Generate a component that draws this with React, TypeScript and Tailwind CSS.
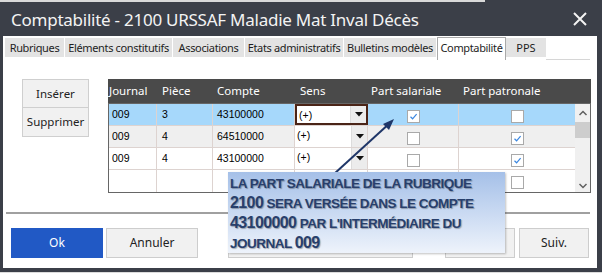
import React from "react";

const ui = { fontFamily: '"Noto Sans", "Open Sans", sans-serif' };
const cellFont = { fontFamily: '"Liberation Sans", Arial, sans-serif' };
const calloutFont = { fontFamily: '"Liberation Sans", Arial, sans-serif' };

function Check({ checked }: { checked: boolean }) {
  return (
    <div className="w-[13px] h-[13px] bg-white border border-[#a9a9a9] flex items-center justify-center">
      {checked && (
        <svg width="11" height="11" viewBox="0 0 11 11">
          <path d="M2.5 5.8 L4.6 7.8 L8.6 3.2" fill="none" stroke="#3a86e0" strokeWidth="1.2" />
        </svg>
      )}
    </div>
  );
}

function Sens({ selected }: { selected?: boolean }) {
  return (
    <div
      className={
        "w-[73px] h-full flex bg-white " +
        (selected ? "border-2 border-[#4a2417]" : "border-r border-[#ddd3d0]")
      }
    >
      <div className="flex-1 pl-[2px] pt-[4px] text-[10.5px] text-black leading-none" style={cellFont}>
        (+)
      </div>
      <div className="w-[16px] h-full bg-[#ececec] border-l border-[#dcdcdc] flex items-center justify-center">
        <svg width="8" height="5" viewBox="0 0 8 5">
          <path d="M0 0 H8 L4 4.5 Z" fill="#111" />
        </svg>
      </div>
    </div>
  );
}

type Row = { j: string; p: string; c: string; sal: boolean; pat: boolean; bg: string; sel?: boolean };

const rows: Row[] = [
  { j: "009", p: "3", c: "43100000", sal: true, pat: false, bg: "bg-[#a6d8fb]", sel: true },
  { j: "009", p: "4", c: "64510000", sal: false, pat: true, bg: "bg-[#efefef]" },
  { j: "009", p: "4", c: "43100000", sal: false, pat: true, bg: "bg-white" },
];

function DataRow({ r }: { r: Row }) {
  const txt = "text-[10.5px] text-black leading-none pt-[5px]";
  return (
    <div className={"flex h-[24px] border-b border-[#ddd3d0] " + r.bg}>
      <div className={"w-[48px] border-r border-[#ddd3d0] pl-[3px] " + txt} style={cellFont}>{r.j}</div>
      <div className={"w-[56px] border-r border-[#ddd3d0] pl-[5px] " + txt} style={cellFont}>{r.p}</div>
      <div className={"w-[82px] border-r border-[#ddd3d0] pl-[4px] " + txt} style={cellFont}>{r.c}</div>
      <Sens selected={r.sel} />
      <div className="w-[91px] border-r border-[#ddd3d0] flex justify-center pt-[6px]">
        <Check checked={r.sal} />
      </div>
      <div className="w-[116px] flex justify-center pt-[6px]">
        <Check checked={r.pat} />
      </div>
    </div>
  );
}

function Btn({ children, w, extra }: { children?: React.ReactNode; w: string; extra?: string }) {
  return (
    <div
      className={
        "h-[30px] flex items-center justify-center text-[12px] text-[#222] bg-[#f1f1f1] border border-[#cdcdcd] " +
        w +
        " " +
        (extra || "")
      }
      style={ui}
    >
      {children}
    </div>
  );
}

export default function App() {
  const tabs = [
    { t: "Rubriques", w: "w-[60px]" },
    { t: "Eléments constitutifs", w: "w-[108px]" },
    { t: "Associations", w: "w-[72px]" },
    { t: "Etats administratifs", w: "w-[99px]" },
    { t: "Bulletins modèles", w: "w-[93px]" },
  ];
  return (
    <div className="relative w-[602px] h-[273px] bg-[#3b3f48] flex flex-col overflow-hidden" style={ui}>
      <div className="h-[2px] flex">
        <div className="w-[485px] bg-[#d9d9d9]" />
      </div>
      <div className="h-[34px] flex items-center justify-between pl-[11px] pr-[15px]">
        <span className="text-[17px] text-[#f3f3f3] tracking-[-0.25px] leading-none whitespace-nowrap">
          Comptabilité - 2100 URSSAF Maladie Mat Inval Décès
        </span>
        <svg width="14" height="14" viewBox="0 0 14 14">
          <path d="M1 1 L13 13 M13 1 L1 13" stroke="#f3f3f3" strokeWidth="2" />
        </svg>
      </div>

      <div className="flex-1 ml-[3px] mr-[5px] bg-white flex flex-col">
        {/* tabs */}
        <div className="h-[24px] flex items-start pl-[2px]">
          {tabs.map((t) => (
            <div
              key={t.t}
              className={
                "mt-[2px] h-[19px] bg-[#e3e3e3] border-r border-white flex items-center justify-center text-[11px] tracking-[-0.35px] text-[#1e1e1e] leading-none whitespace-nowrap overflow-hidden " +
                t.w
              }
            >
              {t.t}
            </div>
          ))}
          <div className="mt-[1px] h-[23px] w-[69px] bg-white border-l border-t border-r border-[#a9a9a9] flex items-start pt-[4px] justify-center text-[11px] tracking-[-0.35px] text-[#1e1e1e] leading-none whitespace-nowrap">
            Comptabilité
          </div>
          <div className="mt-[2px] h-[19px] w-[40px] bg-[#e3e3e3] flex items-center justify-center text-[11px] text-[#1e1e1e] leading-none">
            PPS
          </div>
          <div className="flex-1 h-full border-b border-[#d6d6d6] mr-[7px]" />
        </div>

        {/* panel */}
        <div className="flex mt-[19px] pl-[19px]">
          <div className="w-[67px] h-[58px] border border-[#cfcfcf] bg-[#f1f1f1] flex flex-col">
            <div className="h-[28px] border-b border-[#cfcfcf] flex items-center justify-center text-[11.5px] text-[#222]">
              Insérer
            </div>
            <div className="flex-1 flex items-center justify-center text-[11.5px] text-[#222]">Supprimer</div>
          </div>

          <div className="ml-[19px] w-[483px] flex flex-col">
            <div className="h-[24px] bg-[#4a4a4a] flex items-center text-[11.5px] text-white leading-none">
              <div className="w-[49px] pl-[1px]">Journal</div>
              <div className="w-[56px] pl-[5px]">Pièce</div>
              <div className="w-[82px] pl-[4px]">Compte</div>
              <div className="w-[73px] pl-[5px]">Sens</div>
              <div className="w-[91px] pl-[3px]">Part salariale</div>
              <div className="w-[116px] pl-[4px]">Part patronale</div>
            </div>
            <div className="h-[90px] border border-[#666666] flex overflow-hidden">
              <div className="w-[466px] flex flex-col">
                {rows.map((r, i) => (
                  <DataRow key={i} r={r} />
                ))}
                <div className="flex h-[24px] bg-white">
                  <div className="w-[48px] border-r border-[#ddd3d0]" />
                  <div className="w-[56px] border-r border-[#ddd3d0]" />
                  <div className="w-[82px] border-r border-[#ddd3d0]" />
                  <div className="w-[73px] border-r border-[#ddd3d0]" />
                  <div className="w-[91px] border-r border-[#ddd3d0] flex justify-center pt-[6px]">
                    <Check checked={false} />
                  </div>
                  <div className="w-[116px] flex justify-center pt-[6px]">
                    <Check checked={false} />
                  </div>
                </div>
              </div>
              <div className="w-[15px] bg-[#f0f0f0] flex flex-col items-center">
                <svg width="10" height="8" viewBox="0 0 10 8" className="mt-[5px]">
                  <path d="M1.5 6 L5 2.5 L8.5 6" fill="none" stroke="#606060" strokeWidth="1.5" />
                </svg>
                <div className="mt-[5px] w-[15px] h-[16px] bg-[#cdcdcd]" />
                <div className="flex-1" />
                <svg width="10" height="8" viewBox="0 0 10 8" className="mb-[2px]">
                  <path d="M1.5 2 L5 5.5 L8.5 2" fill="none" stroke="#606060" strokeWidth="1.5" />
                </svg>
              </div>
            </div>
          </div>
        </div>

        <div className="mt-[19px] ml-[3px] mr-[7px] h-[2px] bg-[#a0a0a0]" />

        <div className="mt-[14px] pl-[8px] flex">
          <div className="w-[92px] h-[30px] bg-[#2159c5] flex items-center justify-center text-[12px] text-white">
            Ok
          </div>
          <Btn w="w-[92px]" extra="ml-[3px]">Annuler</Btn>
          <Btn w="w-[185px]" extra="ml-[30px]" />
          <Btn w="w-[70px]" extra="ml-[32px]">Préc.</Btn>
          <Btn w="w-[70px]" extra="ml-[4px]">Suiv.</Btn>
        </div>
      </div>
      <div className="h-[4px]" />
      <div className="h-[1px] bg-[#dcdcdc]" />

      {/* arrow */}
      <svg className="absolute left-[325px] top-[112px]" width="80" height="70" viewBox="0 0 80 70">
        <path d="M9 62 L66 10" stroke="#1f3668" strokeWidth="2" />
        <path d="M69 7 L58 12 L64 18 Z" fill="#1f3668" />
      </svg>

      {/* callout */}
      <div
        className="absolute left-[228px] top-[172px] w-[277px] h-[81px] bg-gradient-to-b from-[#a5c0e8] to-[#eef3fb] pl-[2px] pt-[2px] text-[#283f6c] font-bold leading-[19px] shadow-[1px_1px_2px_rgba(0,0,0,0.25)]"
        style={{ ...calloutFont, textShadow: "1px 1px 1px rgba(0,0,0,0.3)" }}
      >
        <div className="text-[13.5px] tracking-[-0.5px] whitespace-nowrap">LA PART SALARIALE DE LA RUBRIQUE</div>
        <div className="text-[13.5px] tracking-[-0.5px] whitespace-nowrap">
          <span className="text-[16px] tracking-[-0.6px]">2100</span> SERA VERSÉE DANS LE COMPTE
        </div>
        <div className="text-[13.5px] tracking-[-0.5px] whitespace-nowrap">
          <span className="text-[16px] tracking-[-0.6px]">43100000</span> PAR L'INTERMÉDIAIRE DU
        </div>
        <div className="text-[13.5px] tracking-[-0.5px] whitespace-nowrap">
          JOURNAL <span className="text-[16px] tracking-[-0.6px]">009</span>
        </div>
      </div>
    </div>
  );
}
